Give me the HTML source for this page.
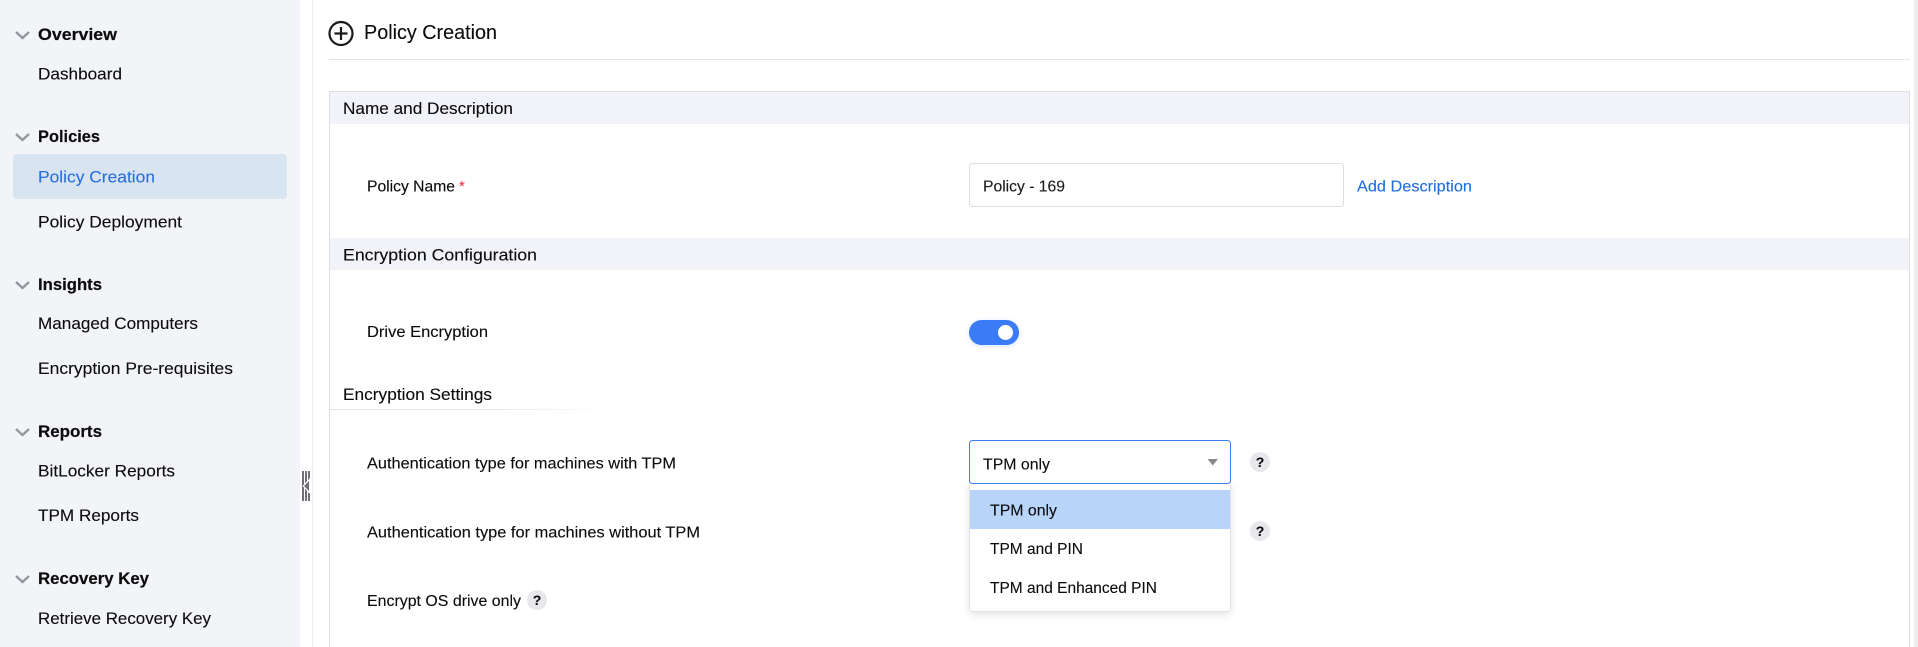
<!DOCTYPE html>
<html lang="en">
<head>
<meta charset="utf-8">
<title>Policy Creation</title>
<style>
html,body{margin:0;padding:0;width:1918px;height:647px;overflow:hidden;background:#fff}
svg{display:block}
text{font-family:"Liberation Sans",Arial,sans-serif;fill:#0c0c0c;white-space:pre;stroke:#0c0c0c;stroke-width:.12px}
.n{font-size:17px}
.b{font-size:17px;font-weight:700;stroke-width:.2px}
.l{font-size:15.5px}
.s{font-size:17px}
.q{font-size:14px;font-weight:700;text-anchor:middle}
</style>
</head>
<body>
<svg xmlns="http://www.w3.org/2000/svg" width="1918" height="647" viewBox="0 0 1918 647">
<defs>
<linearGradient id="fade" x1="0" x2="1" y1="0" y2="0"><stop offset="0" stop-color="#e2e3e8"/><stop offset="0.6" stop-color="#e8e9ed"/><stop offset="1" stop-color="#ffffff"/></linearGradient>
<filter id="sh" x="-10%" y="-10%" width="120%" height="130%"><feDropShadow dx="0" dy="3" stdDeviation="4" flood-color="#000" flood-opacity="0.1"/></filter>
<filter id="ts" x="-15%" y="-30%" width="130%" height="170%"><feDropShadow dx="0" dy="1" stdDeviation="2" flood-color="#3a7cf6" flood-opacity="0.25"/></filter>
</defs>

<!-- sidebar -->
<rect x="0" y="0" width="300" height="647" fill="#f2f4f8"/>
<rect x="13" y="154" width="274" height="45" rx="4" fill="#d8e4f0"/>
<g fill="none" stroke="#94979d" stroke-width="2.4">
<path d="M16 32 L22.5 38 L29 32"/>
<path d="M16 134 L22.5 140 L29 134"/>
<path d="M16 282 L22.5 288 L29 282"/>
<path d="M16 429 L22.5 435 L29 429"/>
<path d="M16 576 L22.5 582 L29 576"/>
</g>
<text class="b" x="38" y="40" textLength="79" lengthAdjust="spacingAndGlyphs">Overview</text>
<text class="n" x="38" y="79.5" textLength="84" lengthAdjust="spacingAndGlyphs">Dashboard</text>
<text class="b" x="38" y="142" textLength="62" lengthAdjust="spacingAndGlyphs">Policies</text>
<text class="n" x="38" y="182.5" textLength="117" lengthAdjust="spacingAndGlyphs" style="fill:#2b6fe3;stroke:#2b6fe3">Policy Creation</text>
<text class="n" x="38" y="227.5" textLength="144" lengthAdjust="spacingAndGlyphs">Policy Deployment</text>
<text class="b" x="38" y="290" textLength="64" lengthAdjust="spacingAndGlyphs">Insights</text>
<text class="n" x="38" y="329" textLength="160" lengthAdjust="spacingAndGlyphs">Managed Computers</text>
<text class="n" x="38" y="374" textLength="195" lengthAdjust="spacingAndGlyphs">Encryption Pre-requisites</text>
<text class="b" x="38" y="437" textLength="64" lengthAdjust="spacingAndGlyphs">Reports</text>
<text class="n" x="38" y="476.5" textLength="137" lengthAdjust="spacingAndGlyphs">BitLocker Reports</text>
<text class="n" x="38" y="521" textLength="101" lengthAdjust="spacingAndGlyphs">TPM Reports</text>
<text class="b" x="38" y="584" textLength="111" lengthAdjust="spacingAndGlyphs">Recovery Key</text>
<text class="n" x="38" y="624" textLength="173" lengthAdjust="spacingAndGlyphs">Retrieve Recovery Key</text>

<!-- collapse handle -->
<g fill="#6e7075">
<rect x="302" y="471" width="2" height="30"/>
<rect x="305" y="471" width="2" height="30"/>
<rect x="308" y="471" width="2" height="30"/>
</g>
<path d="M302.5 486 L310 478 L310 494 Z" fill="#fff"/>
<path d="M304 486 L309 481 L309 491 Z" fill="#6e7075"/>
<rect x="312" y="0" width="1" height="647" fill="#eeeef0"/>

<!-- scrollbar -->
<rect x="1914" y="0" width="4" height="647" fill="#eeeef0"/>

<!-- header -->
<circle cx="341" cy="33.5" r="11.5" fill="none" stroke="#1a1a1a" stroke-width="2.2"/>
<path d="M334.5 33.5 H347.5 M341 27 V40" stroke="#1a1a1a" stroke-width="2.2" fill="none"/>
<text x="364" y="39" font-size="20.5" textLength="133" lengthAdjust="spacingAndGlyphs">Policy Creation</text>
<rect x="329" y="59" width="1581" height="1" fill="#e4e4e7"/>

<!-- panel -->
<path d="M329.5 647 V91.5 H1909.5 V647" fill="none" stroke="#dcdde3" stroke-width="1"/>
<rect x="330" y="92" width="1579" height="32" fill="#f2f3f8"/>
<rect x="330" y="238" width="1579" height="32" fill="#f2f3f8"/>
<text class="s" x="343" y="114" textLength="170" lengthAdjust="spacingAndGlyphs">Name and Description</text>
<text class="s" x="343" y="260.5" textLength="194" lengthAdjust="spacingAndGlyphs">Encryption Configuration</text>
<text class="s" x="343" y="400" textLength="149" lengthAdjust="spacingAndGlyphs">Encryption Settings</text>
<rect x="330" y="409" width="285" height="1" fill="url(#fade)"/>

<!-- name row -->
<text class="l" x="367" y="191.5" textLength="88" lengthAdjust="spacingAndGlyphs">Policy Name</text>
<text x="459" y="191" font-size="15" style="fill:#f0203c;stroke:none">*</text>
<rect x="969.5" y="163.5" width="374" height="43" rx="3" fill="#fff" stroke="#dcdce3"/>
<text class="l" x="983" y="191.5" textLength="82" lengthAdjust="spacingAndGlyphs" style="fill:#1c1c1c">Policy - 169</text>
<text class="l" x="1357" y="191.5" textLength="115" lengthAdjust="spacingAndGlyphs" style="fill:#1f6fe0;stroke:#1f6fe0">Add Description</text>

<!-- drive encryption -->
<text class="l" x="367" y="337" textLength="121" lengthAdjust="spacingAndGlyphs">Drive Encryption</text>
<rect x="969" y="320" width="50" height="25" rx="12.5" fill="#3a7cf6" filter="url(#ts)"/>
<circle cx="1005.5" cy="332.5" r="7.5" fill="#fff"/>

<!-- settings rows -->
<text class="l" x="367" y="468.5" textLength="309" lengthAdjust="spacingAndGlyphs">Authentication type for machines with TPM</text>
<text class="l" x="367" y="537.5" textLength="333" lengthAdjust="spacingAndGlyphs">Authentication type for machines without TPM</text>
<text class="l" x="367" y="606" textLength="154" lengthAdjust="spacingAndGlyphs">Encrypt OS drive only</text>
<circle cx="537" cy="600" r="10" fill="#e8e8ec"/>
<text class="q" x="537" y="605">?</text>

<!-- dropdown -->
<rect x="969.5" y="480.5" width="261" height="131" rx="4" fill="#fff" stroke="#e2e2ea" filter="url(#sh)"/>
<rect x="970" y="490" width="260" height="39" fill="#b8d4f8"/>
<text class="l" x="990" y="515.5" textLength="67" lengthAdjust="spacingAndGlyphs">TPM only</text>
<text class="l" x="990" y="554" textLength="93" lengthAdjust="spacingAndGlyphs">TPM and PIN</text>
<text class="l" x="990" y="593" textLength="167" lengthAdjust="spacingAndGlyphs">TPM and Enhanced PIN</text>

<!-- select -->
<rect x="969.5" y="440.5" width="261" height="43" rx="3" fill="#fff" stroke="#3a7cf6"/>
<text class="l" x="983" y="469.5" textLength="67" lengthAdjust="spacingAndGlyphs">TPM only</text>
<path d="M1207.5 459 H1218 L1212.8 465.5 Z" fill="#8b8b8b"/>

<!-- help icons -->
<circle cx="1260" cy="462" r="10" fill="#e8e8ec"/>
<text class="q" x="1260" y="467">?</text>
<circle cx="1260" cy="531" r="10" fill="#e8e8ec"/>
<text class="q" x="1260" y="536">?</text>
</svg>
</body>
</html>
